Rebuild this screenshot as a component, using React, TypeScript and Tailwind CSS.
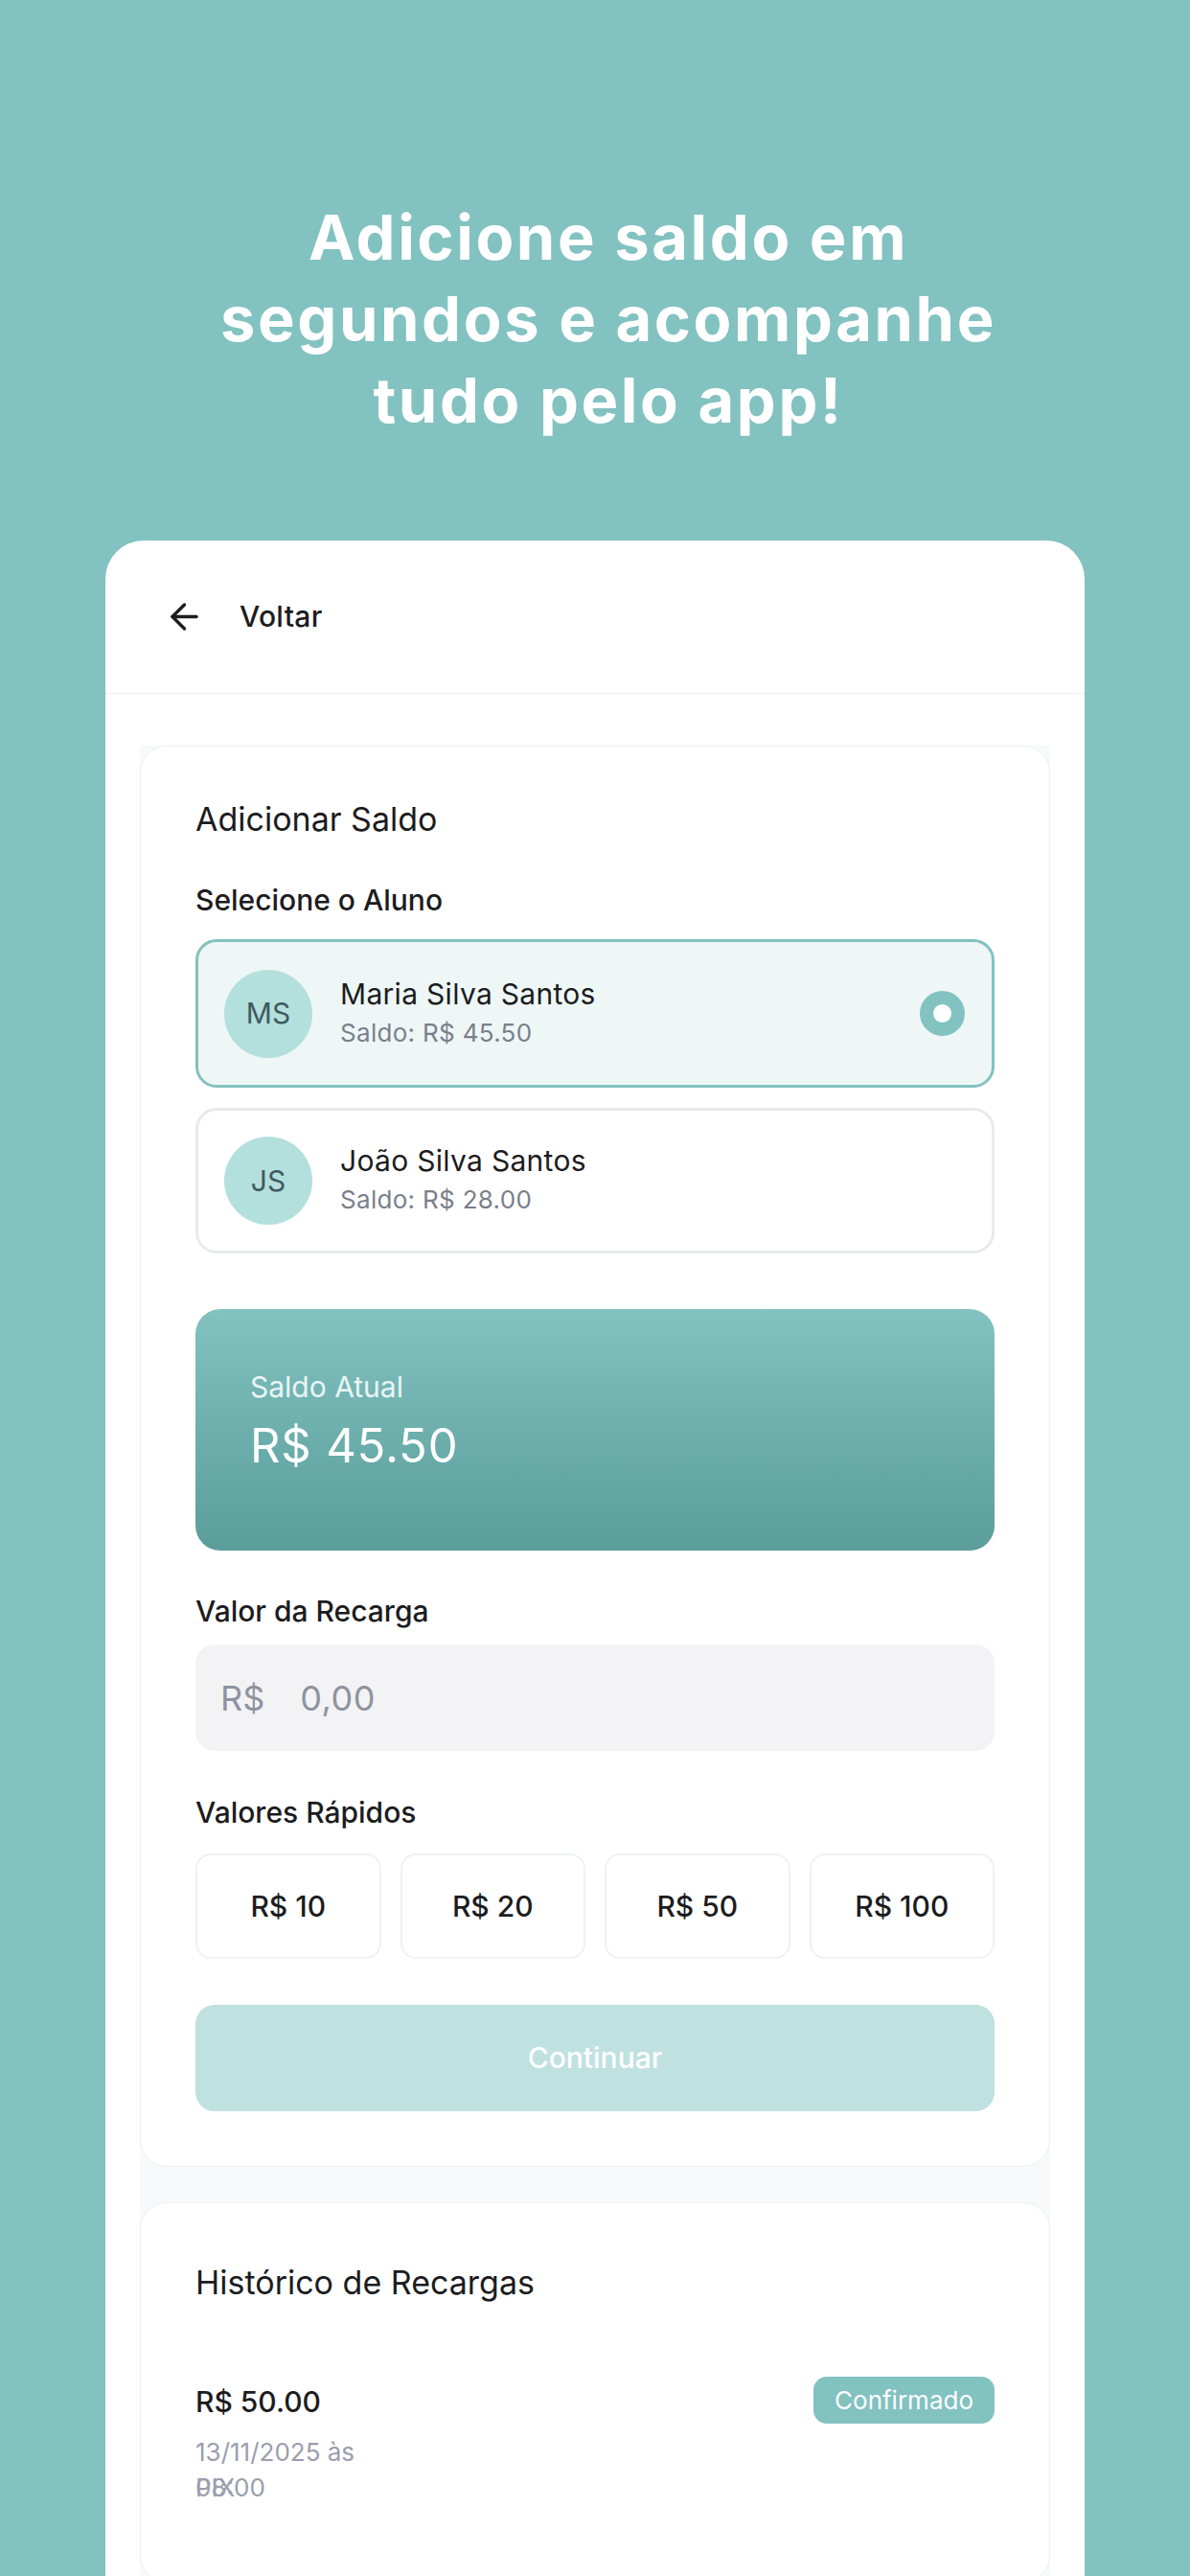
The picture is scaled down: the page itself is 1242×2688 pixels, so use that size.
import React from 'react';
import { ArrowLeft } from 'lucide-react';

type Student = { id: string; initials: string; name: string; balance: string };

const STUDENTS: Student[] = [
    { id: 'ms', initials: 'MS', name: 'Maria Silva Santos', balance: '45.50' },
    { id: 'js', initials: 'JS', name: 'João Silva Santos', balance: '28.00' },
];

const QUICK_VALUES = [10, 20, 50, 100];

const StudentOption: React.FC<{ student: Student; selected: boolean }> = ({ student, selected }) => (
    <div
        className={
            selected
                ? 'h-[155px] flex items-center rounded-[22px] border-[3px] border-[#82c2c1] bg-[#eef7f6] pl-[27px] pr-[28px]'
                : 'h-[152px] flex items-center rounded-[22px] border-[3px] border-[#e9eaec] bg-white pl-[27px] pr-[28px]'
        }
    >
        <div className="w-[92px] h-[92px] rounded-full bg-[#b3dfdd] flex items-center justify-center text-[30px] text-[#3f5a5e] shrink-0">
            {student.initials}
        </div>
        <div className="ml-[29px] flex-1 -mt-[3px] tracking-[0.3px]">
            <div className="text-[30px] leading-[40px] text-[#1c1c1e]">{student.name}</div>
            <div className="mt-[3px] text-[26px] leading-[36px] text-[#7b7f8c]">Saldo: R$ {student.balance}</div>
        </div>
        {selected && (
            <div className="w-[47px] h-[47px] rounded-full bg-[#82c2c1] flex items-center justify-center">
                <div className="w-[19px] h-[19px] rounded-full bg-white" />
            </div>
        )}
    </div>
);

const AddBalanceCard: React.FC = () => (
    <div className="bg-white rounded-[28px] border border-[#eef0f2] pt-[50px] px-[57px] pb-[57px]">
        <h2 className="text-[34px] leading-[51px] text-[#1c1c1e]">Adicionar Saldo</h2>
        <div className="mt-[37px] text-[30px] leading-[45px] font-medium text-[#1c1c1e]">Selecione o Aluno</div>
        <div className="mt-[18px] flex flex-col gap-[21px]">
            {STUDENTS.map((s, i) => (
                <StudentOption key={s.id} student={s} selected={i === 0} />
            ))}
        </div>

        <div className="mt-[58px] h-[252px] rounded-[26px] bg-gradient-to-b from-[#82c2c1] to-[#5a9d9a] pt-[61px] pl-[57px]">
            <div className="text-[30px] leading-[40px] text-white/85">Saldo Atual</div>
            <div className="mt-[12px] text-[49px] leading-[60px] tracking-[0.8px] text-white">R$ 45.50</div>
        </div>

        <div className="mt-[41px] text-[30px] leading-[45px] font-medium text-[#1c1c1e]">Valor da Recarga</div>
        <div className="mt-[12px] h-[111px] rounded-[20px] bg-[#f3f3f5] flex items-center pl-[26px] text-[36px] text-[#8e93a0]">
            <span>R$</span>
            <span className="ml-[37px] tracking-[0.5px]">0,00</span>
        </div>

        <div className="mt-[42px] text-[30px] leading-[45px] font-medium text-[#1c1c1e]">Valores Rápidos</div>
        <div className="mt-[20px] grid grid-cols-4 gap-[20px]">
            {QUICK_VALUES.map((v) => (
                <button
                    key={v}
                    className="h-[110px] rounded-[16px] border-2 border-[#f0f1f3] bg-white text-[30px] font-medium text-[#1c1c1e]"
                >
                    R$ {v}
                </button>
            ))}
        </div>

        <button className="mt-[48px] w-full h-[111px] rounded-[20px] bg-[#bfe1e0] text-[30px] font-medium text-white">
            Continuar
        </button>
    </div>
);

const HistoryCard: React.FC = () => (
    <div className="bg-white rounded-[28px] border border-[#eef0f2] pt-[57px] px-[57px] pb-[80px]">
        <h2 className="text-[34px] leading-[51px] text-[#1c1c1e]">Histórico de Recargas</h2>
        <div className="mt-[73px] flex justify-between items-start">
            <div className="w-[200px]">
                <div className="mt-[6px] text-[30px] leading-[40px] font-medium text-[#1c1c1e]">R$ 50.00</div>
                {/* date wraps onto a second line that the fixed height doesn't reserve, so PIX sits over it */}
                <div className="mt-[14px] h-[37px] text-[26px] leading-[37px] text-[#9a9ead]">13/11/2025 às 08:00</div>
                <div className="text-[26px] leading-[37px] text-[#9a9ead]">PIX</div>
            </div>
            <span className="h-[49px] px-[22px] rounded-[14px] bg-[#82c2c1] text-white text-[26px] flex items-center">
                Confirmado
            </span>
        </div>
    </div>
);

export default function App() {
    return (
        <div className="w-[1242px] h-[2688px] overflow-hidden bg-[#82c2c1] font-['Inter',sans-serif]">
            <h1 className="pt-[205px] pl-[28px] text-center text-white text-[65px] leading-[85px] font-bold tracking-[2.6px]">
                Adicione saldo em
                <br />
                segundos e acompanhe
                <br />
                tudo pelo app!
            </h1>

            <div className="mt-[104px] mx-[110px] bg-white rounded-t-[40px]">
                <div className="h-[160px] border-b border-[#eef0f2] flex items-center pl-[61px]">
                    <ArrowLeft size={43} strokeWidth={1.9} className="text-[#1c1c1e]" />
                    <span className="ml-[36px] text-[30px] font-medium text-[#1c1c1e] tracking-[0.3px]">Voltar</span>
                </div>
                <div className="px-[36px] pt-[54px]">
                    <div className="bg-[#f8f9fa] flex flex-col gap-[37px]">
                        <AddBalanceCard />
                        <HistoryCard />
                    </div>
                </div>
            </div>
        </div>
    );
}
